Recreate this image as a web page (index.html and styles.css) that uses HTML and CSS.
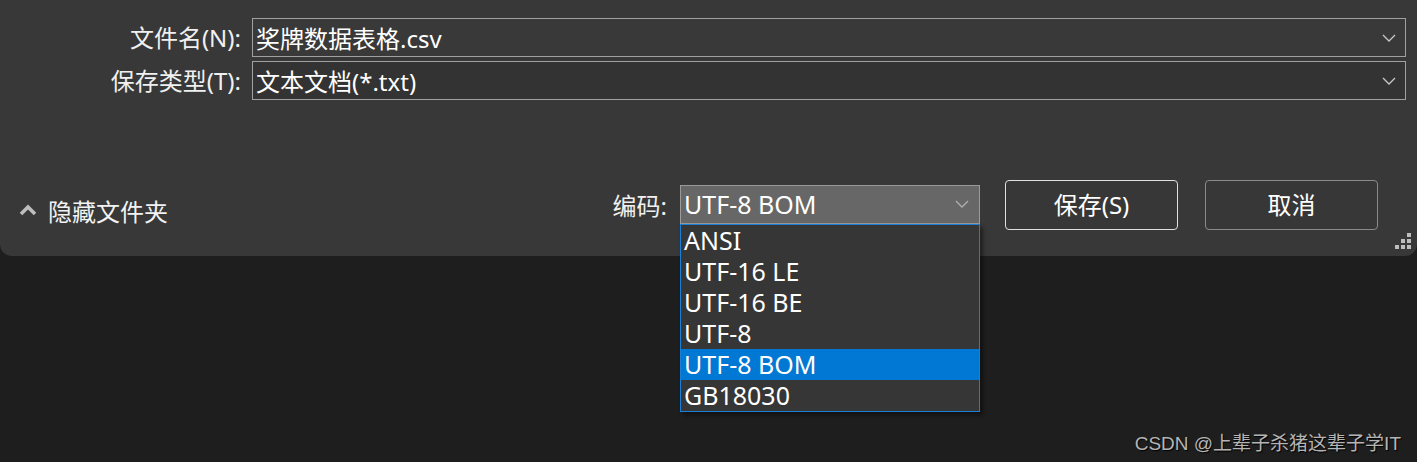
FILE: index.html
```html
<!DOCTYPE html>
<html lang="zh">
<head>
<meta charset="utf-8">
<title>保存</title>
<link rel="stylesheet" href="styles.css">
</head>
<body>
<div class="dialog">
  <div class="fields">
    <label class="label">文件名(N):</label>
    <div class="field field-name">
      <span class="value">奖牌数据表格.csv</span>
      <svg class="chev" width="14" height="8" viewBox="0 0 14 8"><path d="M1 1 L7 7 L13 1" fill="none" stroke="#c8c8c8" stroke-width="1.3"/></svg>
    </div>
    <label class="label">保存类型(T):</label>
    <div class="field field-type">
      <span class="value">文本文档(*.txt)</span>
      <svg class="chev" width="14" height="8" viewBox="0 0 14 8"><path d="M1 1 L7 7 L13 1" fill="none" stroke="#c8c8c8" stroke-width="1.3"/></svg>
    </div>
  </div>
  <div class="actions">
    <div class="toggle">
      <svg width="18" height="12" viewBox="0 0 18 12"><path d="M2 10 L9 3 L16 10" fill="none" stroke="#bdbdbd" stroke-width="3.6"/></svg>
      <span>隐藏文件夹</span>
    </div>
    <div class="encoding">
      <span class="enc-label">编码:</span>
      <div class="combo">
        <span class="value">UTF-8 BOM</span>
        <svg class="chev" width="14" height="8" viewBox="0 0 14 8"><path d="M1 1 L7 7 L13 1" fill="none" stroke="#b0b0b0" stroke-width="1.3"/></svg>
        <ul class="list">
          <li>ANSI</li>
          <li>UTF-16 LE</li>
          <li>UTF-16 BE</li>
          <li>UTF-8</li>
          <li class="selected">UTF-8 BOM</li>
          <li>GB18030</li>
        </ul>
      </div>
    </div>
    <button class="btn btn-primary">保存(S)</button>
    <button class="btn">取消</button>
  </div>
  <div class="grip">
    <i class="d d1"></i><i class="d d2"></i><i class="d d3"></i><i class="d d4"></i><i class="d d5"></i><i class="d d6"></i>
  </div>
</div>
<div class="footer">CSDN @上辈子杀猪这辈子学IT</div>
</body>
</html>
```

FILE: styles.css
```css
* { box-sizing: border-box; }
html, body {
  margin: 0;
  padding: 0;
}
body {
  width: 1417px;
  height: 462px;
  background: #1e1e1e;
  font-family: "Noto Sans", "Noto Sans CJK SC", sans-serif;
  color: #ffffff;
  overflow: hidden;
}
.dialog {
  position: relative;
  height: 256px;
  background: #383838;
  border-radius: 0 0 12px 12px;
  padding: 18px 11px 0 0;
}
.fields {
  display: grid;
  grid-template-columns: 241px 1fr;
  column-gap: 11px;
  row-gap: 4px;
}
.label {
  text-align: right;
  font-size: 24px;
  line-height: 39px;
  color: #f0f0f0;
  white-space: nowrap;
}
.field {
  height: 39px;
  border: 1px solid #a0a0a0;
  display: flex;
  align-items: center;
  padding: 0 9px 0 3px;
  font-size: 24px;
}
.field-name { background: #393939; }
.field-type { background: #333333; }
.value { flex: 1; white-space: nowrap; }
.chev { flex: none; }
.actions {
  display: flex;
  align-items: center;
  margin-top: 80px;
  height: 50px;
}
.toggle {
  display: flex;
  align-items: center;
  gap: 11px;
  margin-left: 19px;
  margin-top: 10px;
  font-size: 24px;
  color: #f2f2f2;
}
.encoding {
  display: flex;
  align-items: center;
  margin-left: auto;
  margin-right: 25px;
  margin-top: -2px;
}
.enc-label {
  font-size: 24px;
  margin-right: 13px;
  color: #f0f0f0;
}
.combo {
  position: relative;
  width: 300px;
  height: 39px;
  background: #676767;
  border: 1px solid #9a9a9a;
  display: flex;
  align-items: center;
  padding: 0 10px 0 3px;
  font-size: 25px;
}
.list {
  position: absolute;
  left: -1px;
  top: 38px;
  width: 300px;
  margin: 0;
  padding: 0;
  list-style: none;
  background: #363636;
  border: 1px solid #1a7fd6;
  box-shadow: 3px 3px 4px rgba(0, 0, 0, 0.45);
  z-index: 2;
}
.list li {
  height: 31px;
  line-height: 31px;
  padding-left: 3px;
  font-size: 25px;
}
.list li.selected { background: #0078d4; }
.btn {
  width: 173px;
  height: 50px;
  background: #373737;
  color: #ffffff;
  border: 1px solid #8a8a8a;
  border-radius: 4px;
  font-family: "Noto Sans", "Noto Sans CJK SC", sans-serif;
  font-size: 24px;
  margin-right: 27px;
  padding: 0 0 3px;
}
.btn-primary { border-color: #e0e0e0; }
.btn:last-child { margin-right: 28px; }
.grip {
  position: absolute;
  right: 6px;
  bottom: 7px;
  width: 16px;
  height: 16px;
}
.d {
  position: absolute;
  width: 4px;
  height: 4px;
  background: #bdbdbd;
}
.d1 { left: 12px; top: 0; }
.d2 { left: 6px; top: 6px; }
.d3 { left: 12px; top: 6px; }
.d4 { left: 0; top: 12px; }
.d5 { left: 6px; top: 12px; }
.d6 { left: 12px; top: 12px; }
.footer {
  text-align: right;
  padding-right: 16px;
  margin-top: 172px;
  font-family: "Liberation Sans", "Noto Sans CJK SC", sans-serif;
  font-size: 19px;
  color: #b4b4b4;
  text-shadow: 1px 1px 1px #000;
}
```
